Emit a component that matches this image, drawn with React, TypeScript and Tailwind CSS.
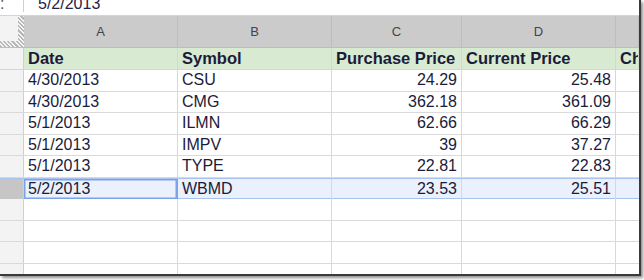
import React from "react";

const rows = [
  { date: "4/30/2013", sym: "CSU", buy: "24.29", cur: "25.48" },
  { date: "4/30/2013", sym: "CMG", buy: "362.18", cur: "361.09" },
  { date: "5/1/2013", sym: "ILMN", buy: "62.66", cur: "66.29" },
  { date: "5/1/2013", sym: "IMPV", buy: "39", cur: "37.27" },
  { date: "5/1/2013", sym: "TYPE", buy: "22.81", cur: "22.83" },
  { date: "5/2/2013", sym: "WBMD", buy: "23.53", cur: "25.51", selected: true },
];

const cols = "grid grid-cols-[24px_154px_154px_130px_154px_1fr]";

function App() {
  return (
    <div className="h-[280px] w-[644px] bg-white font-['Liberation_Sans',Arial,sans-serif] text-[#1b1b3a]">
      <div className="h-[276px] w-[641px] overflow-hidden border-r-2 border-b-2 border-[#3a3a3a] shadow-[2px_2px_3px_rgba(0,0,0,0.45)]">
        {/* formula bar */}
        <div className="flex h-[16px] items-start overflow-hidden border-b border-[#d4d4d4] text-[16px] leading-[16px]">
          <span className="-mt-[4px] w-[23px] text-[#555]">:</span>
          <span className="h-[12px] w-px bg-[#cfcfcf]" />
          <span className="-mt-[4px] pl-[14px] text-[#22224a]">5/2/2013</span>
        </div>

        {/* column letters */}
        <div className={`${cols} h-[32px] border-b border-[#bdbdbd] bg-[#cbcbcb] text-[13px] text-[#444]`}>
          <div className="bg-[repeating-linear-gradient(45deg,#b8b8b8_0_1.5px,#f4f4f4_1.5px_3px)] pr-[6px] pb-[6px]">
            <div className="h-full w-full bg-[#f3f3f3]" />
          </div>
          {["A", "B", "C", "D", ""].map((l, i) => (
            <div key={i} className="flex items-center justify-center border-r border-[#bdbdbd]">
              {l}
            </div>
          ))}
        </div>

        {/* header row */}
        <div className={`${cols} h-[22px] border-b border-[#d6d6d6] text-[16.5px] font-bold leading-[21px]`}>
          <div className="border-r border-[#d0d0d0] bg-[#f3f3f3]" />
          {["Date", "Symbol", "Purchase Price", "Current Price", "Change"].map((h) => (
            <div key={h} className="overflow-hidden whitespace-nowrap border-r border-[#cfdcc9] bg-[#d9ead3] pl-[4px]">
              {h}
            </div>
          ))}
        </div>

        {rows.map((r) => (
          <div
            key={r.sym}
            className={`${cols} h-[21.5px] text-[16px] leading-[20px] ${
              r.selected ? "border-y border-[#a7c3ee] bg-[#eaf1fc]" : "border-b border-[#dadada]"
            }`}
          >
            <div className={`border-r border-[#d0d0d0] ${r.selected ? "bg-[#c6c6c6]" : "bg-[#f3f3f3]"}`} />
            <div
              className={`border-r pl-[4px] ${
                r.selected ? "border-[#7aa3ea] shadow-[inset_0_0_0_1.5px_#7aa3ea]" : "border-[#d8d8d8]"
              }`}
            >
              {r.date}
            </div>
            <div className="border-r border-[#d8d8d8] pl-[4px]">{r.sym}</div>
            <div className="border-r border-[#d8d8d8] pr-[4px] text-right">{r.buy}</div>
            <div className="border-r border-[#d8d8d8] pr-[4px] text-right">{r.cur}</div>
            <div />
          </div>
        ))}

        {[0, 1, 2, 3].map((i) => (
          <div key={i} className={`${cols} h-[21.5px] border-b border-[#dadada]`}>
            <div className="border-r border-[#d0d0d0] bg-[#f3f3f3]" />
            <div className="border-r border-[#d8d8d8]" />
            <div className="border-r border-[#d8d8d8]" />
            <div className="border-r border-[#d8d8d8]" />
            <div className="border-r border-[#d8d8d8]" />
            <div />
          </div>
        ))}
      </div>
    </div>
  );
}

export default App;
